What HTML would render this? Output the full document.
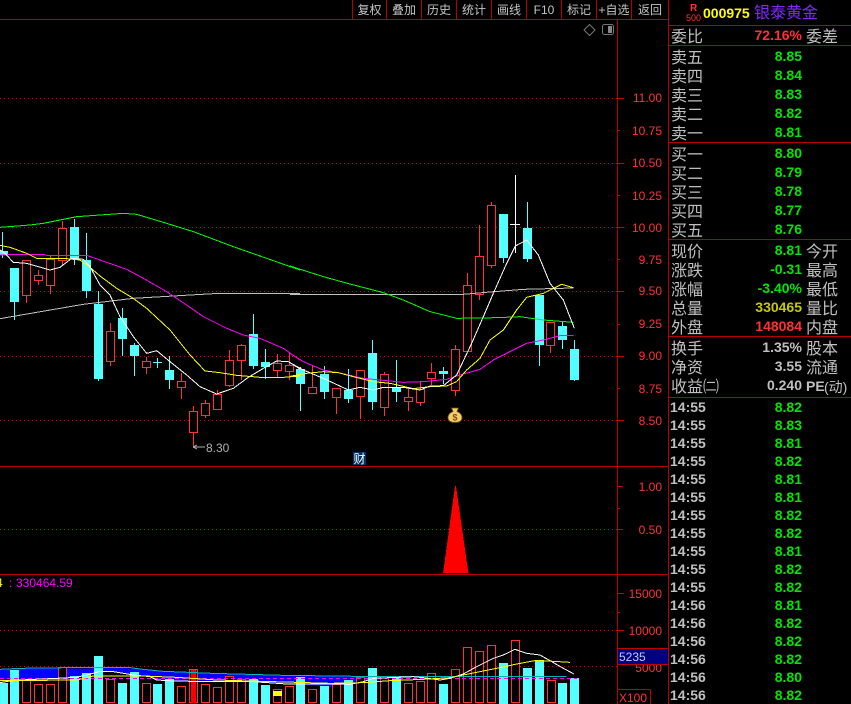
<!DOCTYPE html>
<html><head><meta charset="utf-8"><title>000975</title>
<style>
html,body{margin:0;padding:0;background:#000;width:851px;height:704px;overflow:hidden}
svg{display:block}
text{font-family:"Liberation Sans","WenQuanYi Zen Hei","Noto Sans CJK SC",sans-serif}
.t text{font-size:12px;fill:#c4c4c4;text-anchor:middle}
.ax text{font-size:12px;fill:#ff3232;text-anchor:end}
.l text{font-size:16px;fill:#c0c0c0}
.n text{font-size:14px;font-weight:bold;text-anchor:end;fill:#00e600}
.n text.r{fill:#ff3232}
.n text.y{fill:#c8c800}
.n text.g{fill:#c0c0c0}
.tm text{font-size:14px;font-weight:bold;fill:#c0c0c0}
</style></head><body>
<svg width="851" height="704" viewBox="0 0 851 704" xmlns="http://www.w3.org/2000/svg" shape-rendering="crispEdges">
<rect width="851" height="704" fill="#000"/>
<!-- dotted grid -->
<path d="M0 98.5H617M0 163.5H617M0 227.5H617M0 291.5H617M0 356.5H617M0 420.5H617M0 529.5H617M0 630.5H617M0 666.5H617" stroke="#d00000" stroke-width="1" stroke-dasharray="1 3" fill="none"/>
<!-- frame -->
<path d="M0 19.5H668.5M0 466.5H668M0 574.5H668M617.5 20V704M668.5 0V704M352.5 0V19M386.5 0V19M421.5 0V19M456.5 0V19M491.5 0V19M526.5 0V19M561.5 0V19M596.5 0V19M631.5 0V19M669 25.5H851M669 45.5H851M669 142.5H851M669 239.5H851M669 336.5H851M669 397.5H851" stroke="#b40000" fill="none"/>
<path d="M617 98.5H624M617 130.5H620M617 163.5H624M617 195.5H620M617 227.5H624M617 259.5H620M617 291.5H624M617 324.5H620M617 356.5H624M617 388.5H620M617 420.5H624M617 486.5H623M617 508.5H620M617 529.5H623M617 593.5H624M617 612.5H620M617 630.5H624" stroke="#c80000" fill="none"/>
<!-- toolbar -->
<g class="t">
<text x="369.500" y="14">复权</text><text x="404" y="14">叠加</text><text x="439" y="14">历史</text><text x="474" y="14">统计</text><text x="509" y="14">画线</text><text x="544" y="14">F10</text><text x="579" y="14">标记</text><text x="614" y="14">+自选</text><text x="650" y="14">返回</text>
</g>
<!-- small icons -->
<path d="M589.500 24.500L595 30L589.500 35.500L584 30Z" stroke="#777" fill="none" shape-rendering="auto"/>
<rect x="602.500" y="24.500" width="11" height="10" rx="2" stroke="#777" fill="#000" shape-rendering="auto"/>
<rect x="608" y="26" width="4" height="7" fill="#888"/>
<!-- axis labels -->
<g class="ax">
<text x="662" y="102">11.00</text><text x="662" y="135">10.75</text><text x="662" y="167">10.50</text><text x="662" y="200">10.25</text><text x="662" y="232">10.00</text><text x="662" y="264">9.75</text><text x="662" y="295">9.50</text><text x="662" y="328">9.25</text><text x="662" y="360">9.00</text><text x="662" y="393">8.75</text><text x="662" y="425">8.50</text>
<text x="662" y="491">1.00</text><text x="662" y="534">0.50</text>
<text x="662" y="598">15000</text><text x="662" y="635">10000</text><text x="662" y="672">5000</text>
</g>
<!-- wicks -->
<path fill="none" stroke="#54ffff" d="M2.500 232V258M14.500 320V268M74.500 219V265M86.500 233V298M98.500 291V381M122.500 308V356M134.500 343V376M157.500 358V368M153 362.500H162M169.500 356V389M253.500 314V369M265.500 349V379M300.500 367V411M324.500 366V399M348.500 369V403M372.500 340V410M396.500 360V402M443.500 367V384M503.500 258V263M527.500 202V262M539.500 295V366M562.500 322V349M574.500 340V381"/>
<path fill="none" stroke="#ff3232" d="M26.500 295V303M38.500 270V285M50.500 256V294M62.500 221V265M110.500 323V366M146.500 357V374M181.500 373V399M193.500 406V447M205.500 400V418M217.500 390V395M229.500 350V387M241.500 344V380M277.500 354V377M289.500 353V380M312.500 366V388M336.500 397V414M360.500 397V419M384.500 372V416M408.500 388V411M420.500 381V406M431.500 363V385M455.500 345V396M467.500 273V286M479.500 225V300M491.500 202V268M550.500 345V353"/>
<path fill="none" stroke="#fff" d="M515.500 175V253M510 224.500H520"/>
<!-- cyan bodies -->
<g fill="#54ffff">
<rect x="0" y="251" width="8" height="4"/><rect x="10" y="268" width="9" height="34"/><rect x="70" y="227" width="9" height="32"/><rect x="82" y="260" width="9" height="31"/><rect x="94" y="304" width="9" height="75"/><rect x="118" y="318" width="9" height="21"/><rect x="130" y="345" width="9" height="11"/><rect x="165" y="370" width="9" height="10"/><rect x="249" y="334" width="9" height="32"/><rect x="261" y="362" width="9" height="5"/><rect x="296" y="369" width="9" height="15"/><rect x="320" y="374" width="9" height="18"/><rect x="344" y="390" width="9" height="9"/><rect x="368" y="353" width="9" height="49"/><rect x="392" y="388" width="9" height="4"/><rect x="439" y="371" width="9" height="3"/><rect x="499" y="214" width="9" height="44"/><rect x="523" y="228" width="9" height="31"/><rect x="535" y="295" width="9" height="50"/><rect x="558" y="326" width="9" height="14"/><rect x="570" y="349" width="9" height="31"/>
</g>
<!-- red bodies -->
<g fill="#000" stroke="#ff3232">
<rect x="22.500" y="260.500" width="8" height="35"/><rect x="34.500" y="275.500" width="8" height="5"/><rect x="46.500" y="259.500" width="8" height="26"/><rect x="58.500" y="228.500" width="8" height="32"/><rect x="106.500" y="331.500" width="8" height="30"/><rect x="142.500" y="361.500" width="8" height="6"/><rect x="177.500" y="381.500" width="8" height="6"/><rect x="189.500" y="411.500" width="8" height="21"/><rect x="201.500" y="403.500" width="8" height="12"/><rect x="213.500" y="394.500" width="8" height="15"/><rect x="225.500" y="360.500" width="8" height="25"/><rect x="237.500" y="345.500" width="8" height="15"/><rect x="273.500" y="363.500" width="8" height="7"/><rect x="285.500" y="365.500" width="8" height="6"/><rect x="308.500" y="387.500" width="8" height="6"/><rect x="332.500" y="388.500" width="8" height="9"/><rect x="356.500" y="370.500" width="8" height="26"/><rect x="380.500" y="374.500" width="8" height="33"/><rect x="404.500" y="397.500" width="8" height="4"/><rect x="416.500" y="389.500" width="8" height="13"/><rect x="427.500" y="372.500" width="8" height="6"/><rect x="451.500" y="349.500" width="8" height="41"/><rect x="463.500" y="285.500" width="8" height="66"/><rect x="475.500" y="256.500" width="8" height="38"/><rect x="487.500" y="205.500" width="8" height="60"/><rect x="546.500" y="322.500" width="8" height="23"/>
</g>
<!-- MA lines, crop 1 coordinates -->
<g fill="none" stroke-width="3" transform="translate(0 190) scale(.33333)">
<polyline stroke="#c0c0c0" points="0,386 110,367 250,343 400,325 520,318 640,311 900,311"/>
<polyline stroke="#00ff00" points="0,112 90,105 130,100 230,80 300,75 370,70 410,73 500,100 580,125 700,170 800,205 900,240"/>
<polyline stroke="#ff00ff" points="0,195 60,193 130,193 140,196 260,196 300,210 380,238 430,265 500,305 560,345 610,380 680,415 730,435 780,445 850,475 900,510"/>
<polyline stroke="#ffff00" points="0,166 30,172 80,190 110,205 190,205 240,210 270,232 300,258 350,295 400,325 440,355 510,420 570,495 615,543 660,548 710,556 780,562 850,562 900,558"/>
<polyline stroke="#fff" points="0,180 15,190 40,217 80,220 150,240 180,232 215,205 250,208 270,230 300,285 330,315 360,380 400,440 440,490 470,482 510,515 560,555 600,590 650,612 700,595 745,562 790,535 830,513 865,515 900,537"/>
</g>
<g fill="none" stroke-width="3" transform="translate(290 170) scale(.33333)">
<polyline stroke="#c0c0c0" points="0,373 520,373 600,366 700,358 850,354"/>
<polyline stroke="#00ff00" points="0,288 100,320 180,342 280,368 340,390 420,425 500,445 620,443 690,440 760,450 850,457"/>
<polyline stroke="#ff00ff" points="0,550 40,575 100,600 145,608 220,625 270,630 340,637 400,635 470,628 510,615 570,598 610,570 660,545 710,520 760,510 810,497 850,496"/>
<polyline stroke="#ffff00" points="0,619 50,610 100,605 145,608 190,620 250,635 300,640 370,656 420,650 470,648 500,635 530,600 570,565 600,510 640,480 680,420 710,382 760,370 815,343 850,353"/>
<polyline stroke="#fff" points="0,578 40,600 100,625 175,660 210,652 250,660 280,652 340,652 390,660 420,648 460,647 500,615 545,520 580,440 610,370 650,280 676,228 710,210 745,255 780,340 820,390 853,475"/>
</g>
<!-- 8.30 mark -->
<path d="M193 447H205M193 447L197 445M193 447L197 449" stroke="#b0b0b0" fill="none"/>
<text x="206" y="452" font-size="12" fill="#b0b0b0">8.30</text>
<!-- money bag -->
<g shape-rendering="auto">
<path d="M451.500 408H458.500L457 411.500C461 413 462.500 416 462 418.500C461.500 421.500 458.500 422.500 455 422.500C451.500 422.500 448.500 421.500 448 418.500C447.500 416 449 413 453 411.500Z" fill="#f2cd6c" stroke="#6e4a10" stroke-width=".8"/>
<text x="455" y="420.500" font-size="9" font-weight="bold" fill="#8a4a10" text-anchor="middle">$</text>
</g>
<!-- 财 -->
<rect x="353" y="452" width="13" height="13" fill="#003264"/>
<text x="353.500" y="463" font-size="12" fill="#fff">财</text>
<!-- pane 2 pyramid -->
<polygon points="455,486 456,486 468,570 468.500,573 443,573 443.500,570" fill="#ff0000"/>
<!-- volume -->
<text x="-4" y="587" font-size="12" fill="#ffff00">4</text>
<text x="9" y="587" font-size="12" fill="#ff00ff">:</text>
<text x="16" y="587" font-size="12" fill="#ff00ff">330464.59</text>
<g transform="translate(0 570) scale(.33333)">
<polygon fill="#0000ff" points="0,298 60,295 275,295 275,292 385,292 385,295 420,297 455,300 490,304 565,307 635,310 745,313 850,316 1140,320 1140,330 1080,335 1050,342 990,350 860,342 760,335 640,335 520,333 470,330 450,320 400,315 340,305 300,304 280,310 230,322 170,325 60,330 30,333 0,338"/>
</g>
<g fill="#54ffff">
<rect x="0" y="683" width="8" height="21"/><rect x="10" y="670" width="9" height="34"/><rect x="70" y="676" width="9" height="28"/><rect x="82" y="673" width="9" height="31"/><rect x="94" y="656" width="9" height="48"/><rect x="118" y="683" width="9" height="21"/><rect x="130" y="672" width="9" height="32"/><rect x="153" y="684" width="9" height="20"/><rect x="165" y="679" width="9" height="25"/><rect x="249" y="679" width="9" height="25"/><rect x="261" y="685" width="9" height="19"/><rect x="296" y="677" width="9" height="27"/><rect x="320" y="686" width="9" height="18"/><rect x="344" y="680" width="9" height="24"/><rect x="368" y="668" width="9" height="36"/><rect x="392" y="677" width="9" height="27"/><rect x="439" y="684" width="9" height="20"/><rect x="499" y="663" width="9" height="41"/><rect x="523" y="668" width="9" height="36"/><rect x="535" y="660" width="9" height="44"/><rect x="558" y="683" width="9" height="21"/><rect x="570" y="678" width="9" height="26"/>
</g>
<g fill="#000" stroke="#ff3232">
<rect x="22.500" y="680.500" width="8" height="22"/><rect x="34.500" y="684.500" width="8" height="18"/><rect x="46.500" y="684.500" width="8" height="18"/><rect x="58.500" y="667.500" width="8" height="35"/><rect x="106.500" y="679.500" width="8" height="23"/><rect x="142.500" y="683.500" width="8" height="19"/><rect x="177.500" y="686.500" width="8" height="16"/><rect x="189.500" y="669.500" width="8" height="33"/><rect x="201.500" y="684.500" width="8" height="18"/><rect x="213.500" y="687.500" width="8" height="15"/><rect x="225.500" y="676.500" width="8" height="26"/><rect x="237.500" y="679.500" width="8" height="23"/><rect x="273.500" y="689.500" width="8" height="13"/><rect x="285.500" y="686.500" width="8" height="16"/><rect x="308.500" y="689.500" width="8" height="13"/><rect x="332.500" y="684.500" width="8" height="18"/><rect x="356.500" y="677.500" width="8" height="25"/><rect x="380.500" y="676.500" width="8" height="26"/><rect x="404.500" y="683.500" width="8" height="19"/><rect x="416.500" y="681.500" width="8" height="21"/><rect x="427.500" y="673.500" width="8" height="29"/><rect x="451.500" y="669.500" width="8" height="33"/><rect x="463.500" y="647.500" width="8" height="55"/><rect x="475.500" y="651.500" width="8" height="51"/><rect x="487.500" y="645.500" width="8" height="57"/><rect x="511.500" y="640.500" width="8" height="62"/><rect x="547.500" y="680.500" width="8" height="22"/>
</g>
<rect x="191" y="670" width="5" height="33" fill="#ff0000"/>
<rect x="273" y="691" width="9" height="5" fill="#ffff00"/>
<g fill="none" stroke-width="3" transform="translate(0 570) scale(.33333)">
<polyline stroke="#00b4b4" points="0,298 60,295 275,292 385,292 420,297 490,304 565,307 635,310 745,313 850,316 1000,318 1140,320 1700,320"/>
</g>
<path d="M0 678.500H577" stroke="#ff00ff" stroke-dasharray="4 3" fill="none"/>
<g fill="none" stroke-width="3" transform="translate(0 570) scale(.33333)">
<polyline stroke="#fff" points="0,338 30,333 60,330 170,325 230,322 280,310 300,304 340,305 400,315 450,320 470,330 520,333 640,335 760,335 860,342 990,342"/>
<polyline stroke="#ffff00" points="0,332 230,330 280,318 430,318 530,322 650,330 750,333 890,337 990,340"/>
</g>
<g fill="none" stroke-width="3" transform="translate(330 570) scale(.33333)">
<polyline stroke="#fff" points="0,342 60,343 100,335 130,325 250,320 280,323 330,330 360,325 400,312 440,290 490,265 520,255 555,238 590,250 630,255 660,272 700,295 732,312"/>
<polyline stroke="#ffff00" points="0,340 100,338 180,332 280,328 360,323 400,315 500,295 560,282 620,271 720,277"/>
</g>
<!-- 5235 / X100 -->
<rect x="617.500" y="648.500" width="51" height="16" fill="#000080" stroke="#c00000"/>
<text x="619" y="661" font-size="12" fill="#c8c8ff">5235</text>
<path d="M617 689.500H650.500V704" stroke="#b40000" fill="none"/>
<text x="619" y="702" font-size="12" fill="#ff3232">X100</text>
<!-- right panel head -->
<text x="690" y="11" font-size="10" font-weight="bold" fill="#ff3232">R</text>
<text x="686" y="21" font-size="9" fill="#ff3232">500</text>
<text x="703" y="18" font-size="14" font-weight="bold" fill="#ffff00">000975</text>
<text x="754" y="18" font-size="16" fill="#8228ff">银泰黄金</text>
<g class="l">
<text x="671" y="42">委比</text><text x="806" y="42">委差</text>
<text x="671" y="63">卖五</text><text x="671" y="82">卖四</text><text x="671" y="101">卖三</text><text x="671" y="120">卖二</text><text x="671" y="139">卖一</text>
<text x="671" y="160">买一</text><text x="671" y="179">买二</text><text x="671" y="198">买三</text><text x="671" y="217">买四</text><text x="671" y="236">买五</text>
<text x="671" y="257">现价</text><text x="806" y="257">今开</text>
<text x="671" y="276">涨跌</text><text x="806" y="276">最高</text>
<text x="671" y="295">涨幅</text><text x="806" y="295">最低</text>
<text x="671" y="314">总量</text><text x="806" y="314">量比</text>
<text x="671" y="333">外盘</text><text x="806" y="333">内盘</text>
<text x="671" y="354">换手</text><text x="806" y="354">股本</text>
<text x="671" y="373">净资</text><text x="806" y="373">流通</text>
<text x="671" y="392">收益㈡</text>
<text x="806" y="391" style="font-size:14px;font-weight:bold">PE</text><text x="824" y="392" style="font-size:14px">(动)</text>
</g>
<g class="n">
<text x="802" y="40" class="r">72.16%</text>
<text x="802" y="61">8.85</text><text x="802" y="80">8.84</text><text x="802" y="99">8.83</text><text x="802" y="118">8.82</text><text x="802" y="137">8.81</text>
<text x="802" y="158">8.80</text><text x="802" y="177">8.79</text><text x="802" y="196">8.78</text><text x="802" y="215">8.77</text><text x="802" y="234">8.76</text>
<text x="802" y="255">8.81</text><text x="802" y="274">-0.31</text><text x="802" y="293">-3.40%</text>
<text x="802" y="312" class="y">330465</text><text x="802" y="331" class="r">148084</text>
<text x="802" y="352" class="g">1.35%</text><text x="802" y="371" class="g">3.55</text><text x="802" y="390" class="g">0.240</text>
<text x="802" y="412">8.82</text><text x="802" y="430">8.83</text><text x="802" y="448">8.81</text><text x="802" y="466">8.82</text><text x="802" y="484">8.81</text><text x="802" y="502">8.81</text><text x="802" y="520">8.82</text><text x="802" y="538">8.82</text><text x="802" y="556">8.81</text><text x="802" y="574">8.82</text><text x="802" y="592">8.82</text><text x="802" y="610">8.81</text><text x="802" y="628">8.82</text><text x="802" y="646">8.82</text><text x="802" y="664">8.82</text><text x="802" y="682">8.80</text><text x="802" y="700">8.82</text>
</g>
<g class="tm">
<text x="670" y="412">14:55</text><text x="670" y="430">14:55</text><text x="670" y="448">14:55</text><text x="670" y="466">14:55</text><text x="670" y="484">14:55</text><text x="670" y="502">14:55</text><text x="670" y="520">14:55</text><text x="670" y="538">14:55</text><text x="670" y="556">14:55</text><text x="670" y="574">14:55</text><text x="670" y="592">14:55</text><text x="670" y="610">14:56</text><text x="670" y="628">14:56</text><text x="670" y="646">14:56</text><text x="670" y="664">14:56</text><text x="670" y="682">14:56</text><text x="670" y="700">14:56</text>
</g>
</svg>
</body></html>
